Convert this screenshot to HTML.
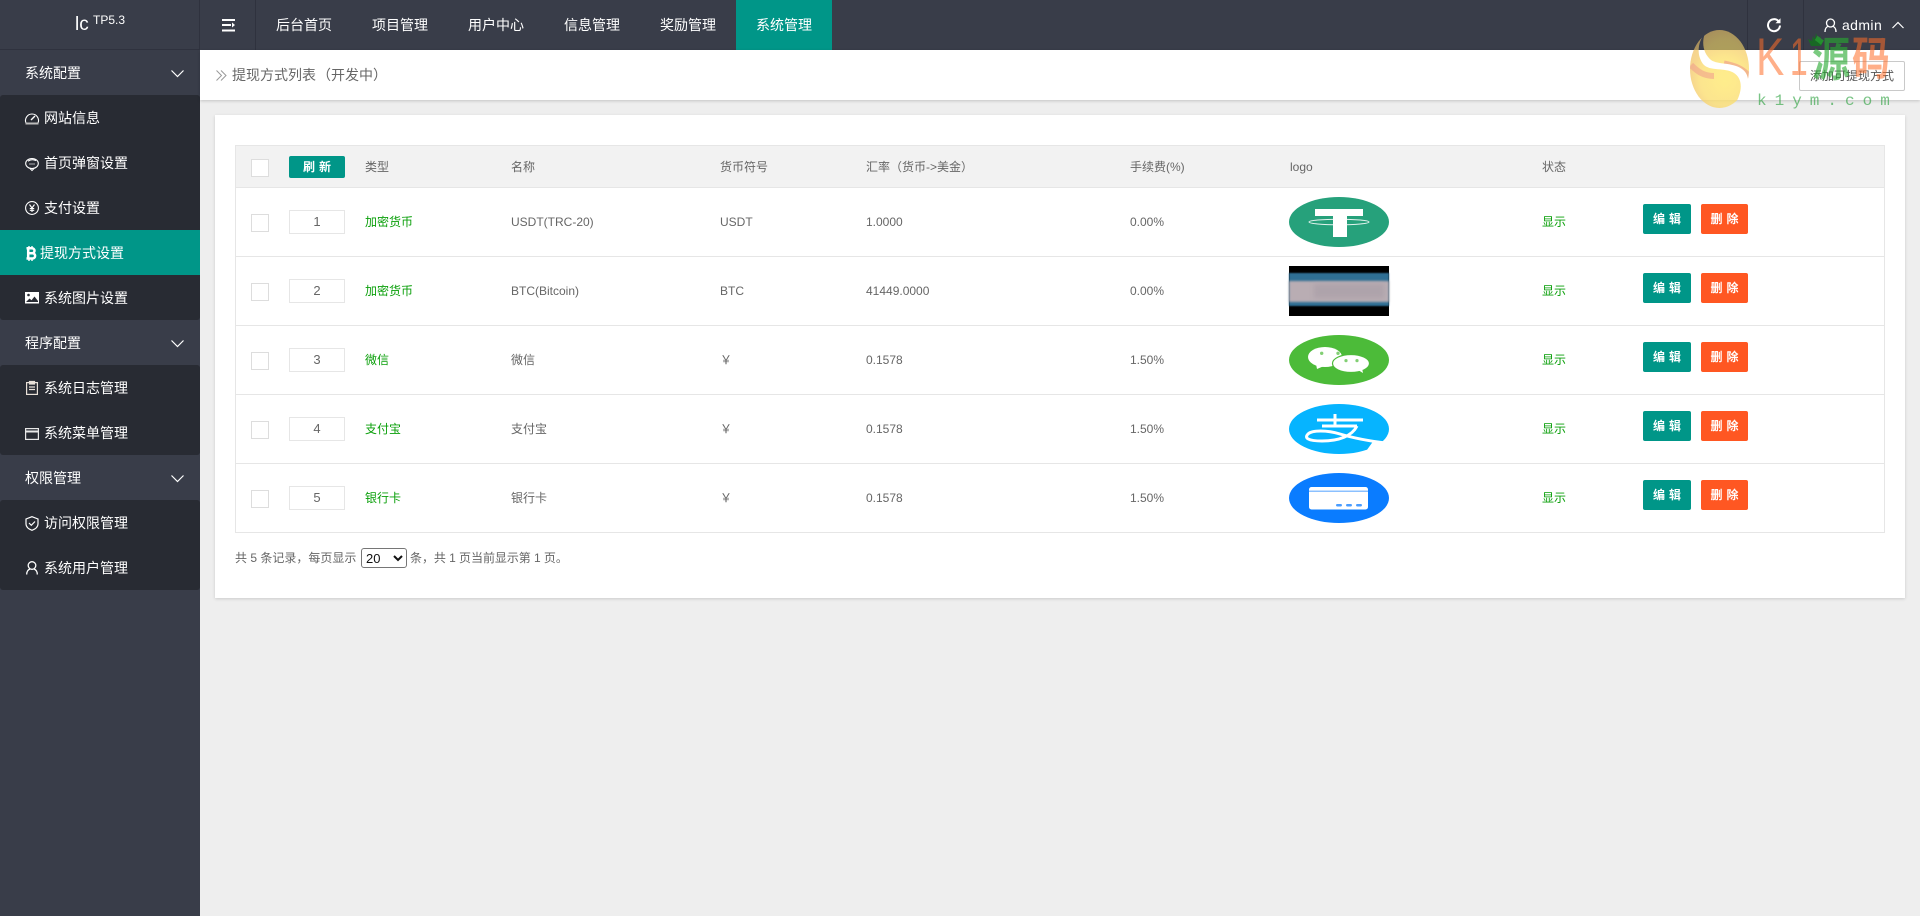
<!DOCTYPE html>
<html lang="zh"><head><meta charset="utf-8"><title>提现方式列表</title>
<style>
*{box-sizing:border-box;text-spacing-trim:space-all}
html,body{margin:0;padding:0;width:1920px;height:916px;overflow:hidden;background:#eee;font-family:"Liberation Sans","Noto Sans CJK SC",sans-serif;font-size:12px;color:#666}
.a{position:absolute;white-space:nowrap}
.side{left:0;top:0;width:200px;height:916px;background:#393D49}
.head{left:0;top:0;width:1920px;height:50px;background:#393D49}
.sep{top:0;width:1px;height:50px;background:#2f323e}
.nav{top:0;width:96px;height:50px;line-height:50px;text-align:center;color:#fff;font-size:14px}
.grp{left:25px;height:45px;line-height:47px;color:#fff;font-size:14px}
.dark{left:0;width:200px;background:#282B33;border-radius:3px}
.it{left:44px;height:45px;line-height:47px;color:#fff;font-size:14px}
.th,.td{height:20px;line-height:20px;font-size:12px;color:#666}
.gr{color:#0a9f0a}
.cb{left:251px;width:18px;height:18px;background:#fff;border:1px solid #ddd}
.in{left:289px;width:56px;height:24px;background:#fff;border:1px solid #e6e6e6;text-align:center;line-height:22px;font-size:13px;color:#666}
.hl{left:235px;width:1650px;height:1px;background:#e6e6e6}
.btn{height:30px;line-height:30px;text-align:center;color:#fff;border-radius:2px;font-size:12px;font-weight:bold;letter-spacing:4px;padding-left:4px}
svg{position:absolute;overflow:visible}
</style></head><body>
<div class="a side"></div>
<div class="a head"></div>
<div class="a" style="left:0;top:49px;width:200px;height:1px;background:#2f323e"></div>
<div class="a sep" style="left:199px"></div><div class="a sep" style="left:255px"></div>
<div class="a sep" style="left:1747px"></div><div class="a sep" style="left:1803px"></div>
<div class="a" style="left:75px;top:12px;font-size:19px;line-height:26px;color:#fff">lc</div>
<div class="a" style="left:93px;top:12px;font-size:12px;line-height:16px;color:#fff">TP5.3</div>
<svg style="left:222px;top:19px" width="14" height="13" fill="#fff"><rect x="0" y="0" width="13" height="2"/><rect x="0" y="5" width="9" height="2"/><path d="M10 3.500L13 6l-3 2.500z"/><rect x="0" y="10.500" width="13" height="2"/></svg>
<div class="a nav" style="left:256px">后台首页</div>
<div class="a nav" style="left:352px">项目管理</div>
<div class="a nav" style="left:448px">用户中心</div>
<div class="a nav" style="left:544px">信息管理</div>
<div class="a nav" style="left:640px">奖励管理</div>
<div class="a nav" style="left:736px;background:#009688">系统管理</div>
<svg style="left:1767px;top:18px" width="14" height="14" fill="none" stroke="#fff" stroke-width="2"><path d="M11.500 3.200A6 6 0 1 0 13 7.500"/><path d="M13.500 .2v5h-5z" fill="#fff" stroke="none"/></svg>
<svg style="left:1824px;top:18px" width="13" height="15" fill="none" stroke="#fff" stroke-width="1.300"><circle cx="6.500" cy="5" r="4"/><path d="M1 14c0-4 2-5.500 3.500-5.800M12 14c0-4-2-5.500-3.500-5.800"/></svg>
<div class="a" style="left:1842px;top:0;line-height:50px;font-size:14px;color:#fff;letter-spacing:.4px">admin</div>
<svg style="left:1892px;top:21px" width="12" height="8" fill="none" stroke="#fff" stroke-width="1.200"><path d="M.5 7L6 1.500 11.500 7"/></svg>

<!-- sidebar -->
<div class="a grp" style="top:50px">系统配置</div>
<svg style="left:171px;top:70px" width="13" height="8" fill="none" stroke="#fff" stroke-width="1.200"><path d="M.5 .5L6.500 6.500 12.500 .5"/></svg>
<div class="a dark" style="top:95px;height:225px"></div>
<div class="a" style="left:0;top:230px;width:200px;height:45px;background:#009688"></div>
<div class="a it" style="top:95px">网站信息</div>
<div class="a it" style="top:140px">首页弹窗设置</div>
<div class="a it" style="top:185px">支付设置</div>
<div class="a it" style="top:230px;left:40px">提现方式设置</div>
<div class="a it" style="top:275px">系统图片设置</div>
<svg style="left:25px;top:112px" width="14" height="13" fill="none" stroke="#fff" stroke-width="1.100"><path d="M1 11a6.500 6.500 0 1 1 12 0"/><path d="M6 8l4-4" stroke-width="1.400"/><path d="M.5 10.500h13v2H.5z" fill="#bbb" stroke="none"/></svg>
<svg style="left:25px;top:157px" width="14" height="14" fill="none" stroke="#fff" stroke-width="1.100"><ellipse cx="7" cy="6.500" rx="6.300" ry="5"/><path d="M3 4.200c2-1.500 5-2 8-.6"/><path d="M4.500 7h1M6.500 7h1M8.500 7h1" stroke-width="1.300"/><path d="M5 11.500l2 2 2-2"/></svg>
<svg style="left:25px;top:201px" width="14" height="14" fill="none" stroke="#fff" stroke-width="1.100"><circle cx="7" cy="7" r="6.400"/><path d="M4.500 3.500L7 7l2.500-3.500M7 7v4M4.800 7.500h4.400M4.800 9.300h4.400"/></svg>
<svg style="left:25px;top:246px" width="11" height="15" fill="none" stroke="#fff"><path d="M1.500 2.300h5.500a2.500 2.500 0 0 1 0 5H2M2 7.300h5.500a2.600 2.600 0 0 1 0 5.200H1.500M3.200 2v11" stroke-width="2.500"/><path d="M4 0v2M7 0v2M4 13v2M7 13v2" stroke-width="1.400"/></svg>
<svg style="left:25px;top:292px" width="14" height="12"><rect width="14" height="11.500" fill="#fff"/><circle cx="3.500" cy="3" r="1.300" fill="#282B33"/><path d="M1 10l3.500-3.500 2 1.800 3-3.800L13 9v1z" fill="#282B33"/></svg>
<div class="a grp" style="top:320px">程序配置</div>
<svg style="left:171px;top:340px" width="13" height="8" fill="none" stroke="#fff" stroke-width="1.200"><path d="M.5 .5L6.500 6.500 12.500 .5"/></svg>
<div class="a dark" style="top:365px;height:90px"></div>
<div class="a it" style="top:365px">系统日志管理</div>
<div class="a it" style="top:410px">系统菜单管理</div>
<svg style="left:26px;top:381px" width="12" height="14" fill="none" stroke="#e8e0d8" stroke-width="1.200"><rect x=".6" y="1.600" width="10.800" height="11.800"/><rect x="3.500" y=".5" width="5" height="2.500" fill="#e8e0d8"/><path d="M3 6h6M3 8.500h6"/></svg>
<svg style="left:25px;top:428px" width="14" height="12" fill="none" stroke="#e8e8e8" stroke-width="1.200"><rect x=".6" y=".6" width="12.800" height="10.800"/><path d="M.6 3.500h12.800" stroke-width="2"/></svg>
<div class="a grp" style="top:455px">权限管理</div>
<svg style="left:171px;top:475px" width="13" height="8" fill="none" stroke="#fff" stroke-width="1.200"><path d="M.5 .5L6.500 6.500 12.500 .5"/></svg>
<div class="a dark" style="top:500px;height:90px"></div>
<div class="a it" style="top:500px">访问权限管理</div>
<div class="a it" style="top:545px">系统用户管理</div>
<svg style="left:25px;top:516px" width="14" height="15" fill="none" stroke="#fff" stroke-width="1.200"><path d="M7 .7l6 2.300v5c0 3-3 5.200-6 6.300-3-1.100-6-3.300-6-6.300v-5z"/><path d="M4 7l2.300 2.300L10 5.500"/></svg>
<svg style="left:26px;top:561px" width="12" height="14" fill="none" stroke="#fff" stroke-width="1.300"><circle cx="6" cy="4.500" r="3.800"/><path d="M.7 13.500c0-4 2-5 3.300-5.500M11.300 13.500c0-4-2-5-3.300-5.500"/></svg>

<!-- breadcrumb -->
<div class="a" style="left:200px;top:50px;width:1720px;height:50px;background:#fff;box-shadow:0 1px 3px rgba(0,0,0,.18)"></div>
<svg style="left:216px;top:70px" width="11" height="11" fill="none" stroke="#999" stroke-width="1"><path d="M.5 .5L5.500 5.500.5 10.500M5 .5L10 5.500 5 10.500"/></svg>
<div class="a" style="left:232px;top:50px;line-height:50px;font-size:14px;color:#666">提现方式列表<span style="margin-left:1px">（开发中）</span></div>
<div class="a" style="left:1799px;top:61px;width:106px;height:30px;line-height:28px;text-align:center;font-size:12px;color:#555;background:#fff;border:1px solid #c9c9c9;border-radius:2px">添加可提现方式</div>

<!-- card -->
<div class="a" style="left:215px;top:115px;width:1690px;height:483px;background:#fff;box-shadow:0 1px 3px rgba(0,0,0,.15)"></div>
<div class="a" style="left:235px;top:145px;width:1650px;height:42px;background:#f2f2f2"></div>
<div class="a hl" style="top:145px"></div><div class="a hl" style="top:187px"></div><div class="a hl" style="top:256px"></div><div class="a hl" style="top:325px"></div><div class="a hl" style="top:394px"></div><div class="a hl" style="top:463px"></div><div class="a hl" style="top:532px"></div>
<div class="a" style="left:235px;top:145px;width:1px;height:388px;background:#e6e6e6"></div>
<div class="a" style="left:1884px;top:145px;width:1px;height:388px;background:#e6e6e6"></div>

<div class="a cb" style="top:159px"></div>
<div class="a btn" style="left:289px;top:156px;width:56px;height:22px;line-height:22px;background:#009688">刷新</div>
<div class="a th" style="left:365px;top:157px">类型</div>
<div class="a th" style="left:511px;top:157px">名称</div>
<div class="a th" style="left:720px;top:157px">货币符号</div>
<div class="a th" style="left:866px;top:157px">汇率（货币-&gt;美金）</div>
<div class="a th" style="left:1130px;top:157px">手续费(%)</div>
<div class="a th" style="left:1290px;top:157px">logo</div>
<div class="a th" style="left:1542px;top:157px">状态</div>

<!-- row 1 -->
<div class="a cb" style="top:214px"></div><div class="a in" style="top:210px">1</div>
<div class="a td gr" style="left:365px;top:212px">加密货币</div><div class="a td" style="left:511px;top:212px">USDT(TRC-20)</div><div class="a td" style="left:720px;top:212px">USDT</div><div class="a td" style="left:866px;top:212px">1.0000</div><div class="a td" style="left:1130px;top:212px">0.00%</div><div class="a td gr" style="left:1542px;top:212px">显示</div>
<div class="a btn" style="left:1643px;top:204px;width:48px;background:#009688">编辑</div><div class="a btn" style="left:1701px;top:204px;width:47px;background:#FF5722">删除</div>
<!-- row 2 -->
<div class="a cb" style="top:283px"></div><div class="a in" style="top:279px">2</div>
<div class="a td gr" style="left:365px;top:281px">加密货币</div><div class="a td" style="left:511px;top:281px">BTC(Bitcoin)</div><div class="a td" style="left:720px;top:281px">BTC</div><div class="a td" style="left:866px;top:281px">41449.0000</div><div class="a td" style="left:1130px;top:281px">0.00%</div><div class="a td gr" style="left:1542px;top:281px">显示</div>
<div class="a btn" style="left:1643px;top:273px;width:48px;background:#009688">编辑</div><div class="a btn" style="left:1701px;top:273px;width:47px;background:#FF5722">删除</div>
<!-- row 3 -->
<div class="a cb" style="top:352px"></div><div class="a in" style="top:348px">3</div>
<div class="a td gr" style="left:365px;top:350px">微信</div><div class="a td" style="left:511px;top:350px">微信</div><div class="a td" style="left:720px;top:350px">￥</div><div class="a td" style="left:866px;top:350px">0.1578</div><div class="a td" style="left:1130px;top:350px">1.50%</div><div class="a td gr" style="left:1542px;top:350px">显示</div>
<div class="a btn" style="left:1643px;top:342px;width:48px;background:#009688">编辑</div><div class="a btn" style="left:1701px;top:342px;width:47px;background:#FF5722">删除</div>
<!-- row 4 -->
<div class="a cb" style="top:421px"></div><div class="a in" style="top:417px">4</div>
<div class="a td gr" style="left:365px;top:419px">支付宝</div><div class="a td" style="left:511px;top:419px">支付宝</div><div class="a td" style="left:720px;top:419px">￥</div><div class="a td" style="left:866px;top:419px">0.1578</div><div class="a td" style="left:1130px;top:419px">1.50%</div><div class="a td gr" style="left:1542px;top:419px">显示</div>
<div class="a btn" style="left:1643px;top:411px;width:48px;background:#009688">编辑</div><div class="a btn" style="left:1701px;top:411px;width:47px;background:#FF5722">删除</div>
<!-- row 5 -->
<div class="a cb" style="top:490px"></div><div class="a in" style="top:486px">5</div>
<div class="a td gr" style="left:365px;top:488px">银行卡</div><div class="a td" style="left:511px;top:488px">银行卡</div><div class="a td" style="left:720px;top:488px">￥</div><div class="a td" style="left:866px;top:488px">0.1578</div><div class="a td" style="left:1130px;top:488px">1.50%</div><div class="a td gr" style="left:1542px;top:488px">显示</div>
<div class="a btn" style="left:1643px;top:480px;width:48px;background:#009688">编辑</div><div class="a btn" style="left:1701px;top:480px;width:47px;background:#FF5722">删除</div>

<!-- logos -->
<svg style="left:1289px;top:197px" width="100" height="50"><ellipse cx="50" cy="25" rx="50" ry="25" fill="#26A17B"/><rect x="26" y="12" width="48" height="7" fill="#fff"/><ellipse cx="50" cy="25" rx="30" ry="2.800" fill="none" stroke="#e4f3ee" stroke-width="1"/><rect x="44" y="19" width="14" height="21" fill="#fff"/></svg>
<svg style="left:1289px;top:266px" width="100" height="50"><rect width="100" height="50" fill="#000"/><rect x="0" y="7" width="100" height="33" fill="#2f6f94" style="filter:blur(.7px)"/><rect x="0" y="15" width="100" height="21" fill="#b9adb3" style="filter:blur(1px)"/><rect x="25" y="18" width="70" height="14" fill="#aea3ab" style="filter:blur(2.500px)"/></svg>
<svg style="left:1289px;top:335px" width="100" height="50"><ellipse cx="50" cy="25" rx="50" ry="25" fill="#4CBB39"/><ellipse cx="36" cy="22" rx="17" ry="10" fill="#fff"/><path d="M27 29l1 5 7-3z" fill="#fff"/><ellipse cx="62" cy="28.500" rx="18.500" ry="9" fill="#fff" stroke="#4CBB39" stroke-width="1.200"/><path d="M69 35l5 3-1-5z" fill="#fff"/><circle cx="32.700" cy="18.300" r="1.700" fill="#82cf74"/><circle cx="49" cy="18.300" r="1.700" fill="#82cf74"/><circle cx="57" cy="25.600" r="1.600" fill="#82cf74"/><circle cx="68" cy="25.600" r="1.600" fill="#82cf74"/></svg>
<svg style="left:1289px;top:404px" width="100" height="50"><ellipse cx="50" cy="25" rx="50" ry="25" fill="#06B4FF"/><path d="M28 16H74M46 10V22M33 22H68M68 22C63 32 50 37 33 37 19 37 15 34 19 30 23 26 38 26 51 30 66 34.500 80 37 97 39" fill="none" stroke="#fff" stroke-width="3"/><path d="M84 37.500L98 40 100 50H75z" fill="#fff"/></svg>
<svg style="left:1289px;top:473px" width="100" height="50"><ellipse cx="50" cy="25" rx="50" ry="25" fill="#0A7CFF"/><rect x="20" y="14" width="59" height="22.500" rx="2.500" fill="#fff"/><rect x="20" y="17.500" width="59" height="1.500" fill="#8bc0ff"/><rect x="47" y="31" width="6" height="2.500" rx="1.200" fill="#4a9dff"/><rect x="57" y="31" width="6" height="2.500" rx="1.200" fill="#4a9dff"/><rect x="67" y="31" width="6" height="2.500" rx="1.200" fill="#4a9dff"/></svg>

<!-- pagination -->
<div class="a" style="left:235px;top:548px;line-height:20px;font-size:12px;color:#666">共 5 条记录，每页显示</div>
<select class="a" style="left:361px;top:548px;width:46px;height:20px;font-size:13px;font-family:'Liberation Sans',sans-serif;background:#fff;color:#111;border:1px solid #767676;border-radius:3px;padding:0"><option>20</option></select>
<div class="a" style="left:410px;top:548px;line-height:20px;font-size:12px;color:#666;letter-spacing:-.05px">条，共 1 页当前显示第 1 页。</div>

<!-- watermark -->
<svg style="left:1690px;top:30px" width="60" height="78"><defs><radialGradient id="eg" cx="58%" cy="55%" r="60%"><stop offset="0" stop-color="#ffe968"/><stop offset=".7" stop-color="#fbdc6a"/><stop offset="1" stop-color="#f2c46a"/></radialGradient><mask id="m"><rect width="60" height="78" fill="#fff"/><path d="M15 3C8 12 6 24 13 34C20 42 35 37 44 43C52 48 54 60 44 76C60 62 62 46 52 39C42 32 28 35 21 30C14 24 11 14 15 3z" fill="#000"/></mask><clipPath id="c"><ellipse cx="29.500" cy="39" rx="29.500" ry="39"/></clipPath></defs><g clip-path="url(#c)" mask="url(#m)"><rect width="60" height="78" fill="url(#eg)" opacity=".6"/><rect y="20" width="60" height="58" fill="url(#eg)" opacity=".4"/><path d="M1 35C8 42 14 46 24 46" fill="none" stroke="#ef9a8c" stroke-width="6" opacity=".55"/><path d="M34 33C44 35 54 38 60 47" fill="none" stroke="#ef9a8c" stroke-width="5" opacity=".6"/></g></svg>
<div class="a" style="left:1756px;top:23px;font-size:53px;line-height:70px;color:rgba(255,110,40,.55);font-family:'Liberation Sans',sans-serif;transform:scaleX(.8);transform-origin:0 50%">K</div>
<div class="a" style="left:1790px;top:23px;font-size:53px;line-height:70px;color:rgba(255,110,40,.55);font-family:'Liberation Sans',sans-serif;transform:scaleX(.6);transform-origin:0 50%">1</div>
<svg style="left:1808px;top:33px" width="16" height="14"><path d="M0 6l4 2 1-5 2 3 1-6 2 6 3-3-1 5 4-2-3 7H3z" fill="rgba(20,110,30,.85)"/></svg>
<div class="a" style="left:1812px;top:36px;font-size:38px;line-height:50px;font-weight:bold;color:rgba(40,170,50,.62);transform:scaleY(1.25);transform-origin:0 50%">源</div>
<div class="a" style="left:1852px;top:35px;font-size:38px;line-height:50px;font-weight:bold;color:rgba(255,110,40,.55);transform:scaleY(1.2);transform-origin:0 50%">码</div>
<div class="a" style="left:1757px;top:91px;font-size:16px;line-height:20px;letter-spacing:8px;color:rgba(40,160,60,.62);font-family:'Liberation Mono',monospace">k1ym.com</div>
</body></html>
